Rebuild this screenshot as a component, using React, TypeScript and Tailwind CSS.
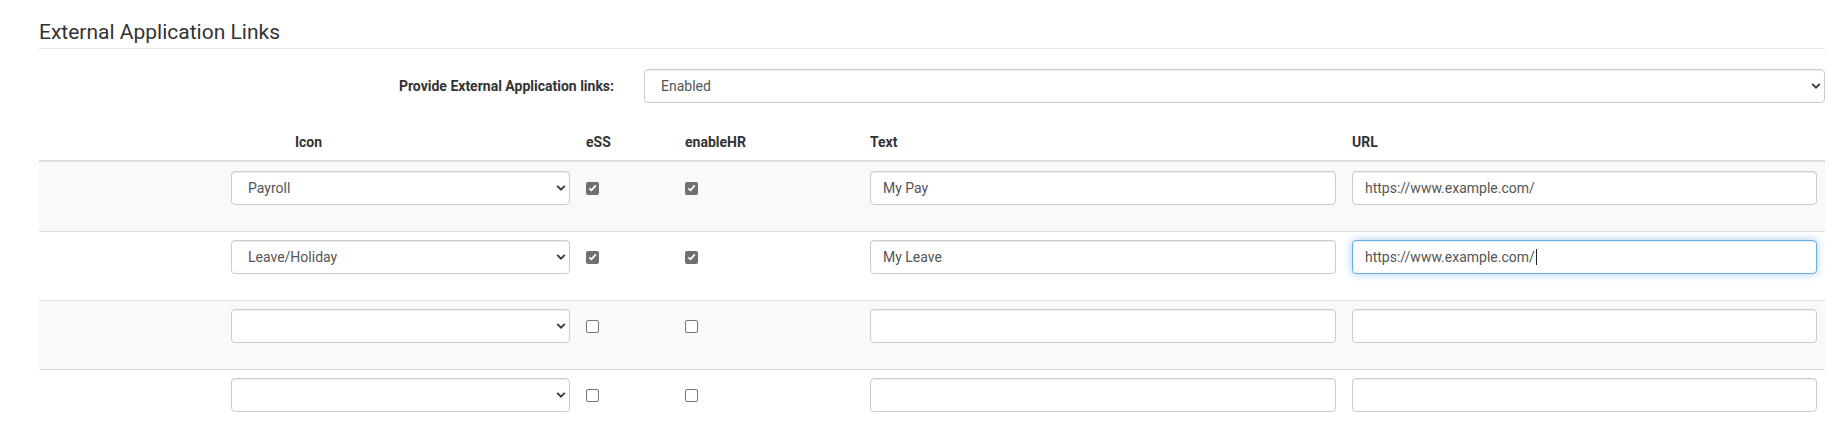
import React from "react";

type Row = {
  icon: string;
  ess: boolean;
  hr: boolean;
  text: string;
  url: string;
  focused?: boolean;
};

const rows: Row[] = [
  { icon: "Payroll", ess: true, hr: true, text: "My Pay", url: "https://www.example.com/" },
  { icon: "Leave/Holiday", ess: true, hr: true, text: "My Leave", url: "https://www.example.com/", focused: true },
  { icon: "", ess: false, hr: false, text: "", url: "" },
  { icon: "", ess: false, hr: false, text: "", url: "" },
];

const iconOptions = ["", "Payroll", "Leave/Holiday", "Benefits", "Expenses", "Training"];

function Chevron() {
  return (
    <svg
      width="10"
      height="7"
      viewBox="0 0 10 7"
      className="pointer-events-none absolute right-[4px] top-1/2 -translate-y-1/2"
    >
      <path d="M1.2 1.4 L5 5.1 L8.8 1.4" fill="none" stroke="#3c3c3c" strokeWidth="2" />
    </svg>
  );
}

function Select({ value, options }: { value: string; options: string[] }) {
  return (
    <div className="relative w-full">
      <select
        defaultValue={value}
        className="h-[34px] w-full appearance-none rounded-[4px] border border-[#ccc] bg-white pl-[16px] pr-[22px] text-[14px] text-[#555] shadow-[inset_0_1px_1px_rgba(0,0,0,0.075)] outline-none"
      >
        {options.map((o) => (
          <option key={o} value={o}>
            {o}
          </option>
        ))}
      </select>
      <Chevron />
    </div>
  );
}

function Check({ checked }: { checked: boolean }) {
  return checked ? (
    <span className="flex h-[13px] w-[13px] items-center justify-center rounded-[2px] bg-[#707070]">
      <svg width="9" height="8" viewBox="0 0 9 8">
        <path d="M1.3 4.3 L3.5 6.3 L7.8 1.3" fill="none" stroke="#ffffff" strokeWidth="1.8" />
      </svg>
    </span>
  ) : (
    <span className="block h-[13px] w-[13px] rounded-[2px] border border-[#767676] bg-white" />
  );
}

function TextInput({ value }: { value: string }) {
  return (
    <input
      type="text"
      defaultValue={value}
      className="h-[34px] w-full rounded-[4px] border border-[#ccc] bg-white px-[12px] text-[14px] text-[#555] shadow-[inset_0_1px_1px_rgba(0,0,0,0.075)] outline-none"
    />
  );
}

function FocusedInput({ value }: { value: string }) {
  return (
    <div className="flex h-[34px] w-full items-center rounded-[4px] border border-[#66afe9] bg-white px-[12px] text-[14px] text-[#555] shadow-[inset_0_1px_1px_rgba(0,0,0,0.075),0_0_8px_rgba(102,175,233,0.6)]">
      <span className="whitespace-pre">{value}</span>
      <span className="ml-[1px] inline-block h-[16px] w-px bg-[#222]" />
    </div>
  );
}

export default function App() {
  return (
    <div className="min-h-[448px] w-full bg-white pl-[39px] pr-[5px] font-[Roboto,'Liberation_Sans',sans-serif] text-[#333]">
      <h2 className="border-b border-[#e5e5e5] pb-[4px] pt-[21px] text-[21px] font-normal leading-[23px] text-[#333]">
        External Application Links
      </h2>

      <div className="mt-[20px] flex h-[34px] items-center">
        <label className="w-[590px] pr-[15px] text-right text-[14px] font-bold leading-[20px] text-[#333]">
          Provide External Application links:
        </label>
        <div className="flex-1 pl-[15px]">
          <Select value="Enabled" options={["Enabled", "Disabled"]} />
        </div>
      </div>

      <div className="mt-[21px]">
        <div className="grid grid-cols-[184px_355px_99px_185px_482px_481px] border-b-2 border-[#ddd] text-[14px] font-bold leading-[20px] text-[#333]">
          <div className="col-span-2 px-2 py-2 text-center">Icon</div>
          <div className="px-2 py-2">eSS</div>
          <div className="px-2 py-2">enableHR</div>
          <div className="px-2 py-2">Text</div>
          <div className="px-2 py-2">URL</div>
        </div>

        {rows.map((r, i) => (
          <div
            key={i}
            className={`grid h-[69px] grid-cols-[184px_355px_99px_185px_482px_481px] ${
              i === 0 ? "pt-[9px]" : "border-t border-[#ddd] pt-2"
            } ${i % 2 === 0 ? "bg-[#f9f9f9]" : "bg-white"}`}
          >
            <div />
            <div className="px-2">
              <Select value={r.icon} options={iconOptions} />
            </div>
            <div className="flex h-[34px] items-center px-2">
              <Check checked={r.ess} />
            </div>
            <div className="flex h-[34px] items-center px-2">
              <Check checked={r.hr} />
            </div>
            <div className="px-2">
              <TextInput value={r.text} />
            </div>
            <div className="px-2">
              {r.focused ? <FocusedInput value={r.url} /> : <TextInput value={r.url} />}
            </div>
          </div>
        ))}
      </div>
    </div>
  );
}
